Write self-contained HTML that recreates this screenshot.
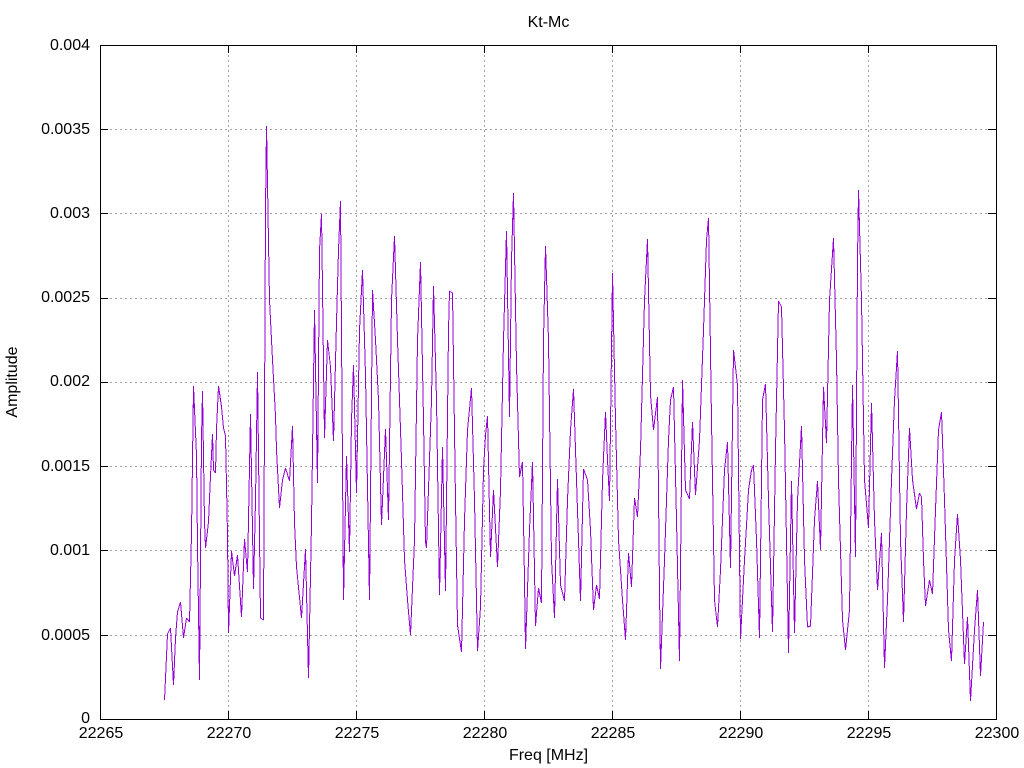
<!DOCTYPE html>
<html>
<head>
<meta charset="utf-8">
<title>Kt-Mc</title>
<style>
html,body{margin:0;padding:0;background:#fff;width:1024px;height:768px;overflow:hidden}
svg{display:block}
text{font-family:"Liberation Sans",sans-serif;font-size:16px;fill:#000}
.g{stroke:#a0a0a0;stroke-width:1;stroke-dasharray:2 3;fill:none}
.k{stroke:#000;stroke-width:1;fill:none}
</style>
</head>
<body>
<svg width="1024" height="768" viewBox="0 0 1024 768" shape-rendering="crispEdges">
<defs>
<filter id="t" filterUnits="userSpaceOnUse" x="0" y="0" width="1024" height="768" color-interpolation-filters="sRGB">
<feComponentTransfer><feFuncA type="discrete" tableValues="0 1"/></feComponentTransfer>
</filter>
</defs>
<rect width="1024" height="768" fill="#fff"/>
<path class="g" d="M100 129.5H996M100 213.5H996M100 298.5H996M100 382.5H996M100 466.5H996M100 550.5H996M100 635.5H996M228.5 45V719M356.5 45V719M484.5 45V719M612.5 45V719M740.5 45V719M868.5 45V719"/>
<path class="k" d="M100 129.5h8M100 213.5h8M100 298.5h8M100 382.5h8M100 466.5h8M100 550.5h8M100 635.5h8M996 129.5h-8M996 213.5h-8M996 298.5h-8M996 382.5h-8M996 466.5h-8M996 550.5h-8M996 635.5h-8M228.5 719v-8M356.5 719v-8M484.5 719v-8M612.5 719v-8M740.5 719v-8M868.5 719v-8M228.5 45v8M356.5 45v8M484.5 45v8M612.5 45v8M740.5 45v8M868.5 45v8"/>
<rect class="k" x="100.5" y="45.5" width="896" height="674" />
<g filter="url(#t)">
<polyline fill="none" stroke="#9400d3" stroke-width="1" stroke-linejoin="bevel" shape-rendering="auto" points="164.5,700 167.5,634 170.5,628 173.5,685 175.5,638 177.5,612 180.5,602 183.5,638 186.5,618 189.5,622 191.5,533 193.5,386 196.5,455 197.5,545 199.5,680 201.5,438 202.5,391 204.5,522 205.5,548 208.5,522 210.5,476 212.5,434 213.5,470 215.5,473 216.5,429 218.5,386 221.5,407 223.5,428 225.5,436 227.5,535 228.5,633 231.5,551 234.5,576 237.5,555 241.5,617 244.5,539 247.5,572 250.5,414 253.5,589 255.5,500 257.5,372 260.5,618 263.5,620 265.5,209 266.5,126 269.5,300 272.5,360 275.5,416 276.5,450 279.5,508 282.5,480 285.5,468 289.5,481 292.5,426 294.5,523 296.5,567 301.5,618 305.5,549 308.5,678 311.5,523 314.5,310 317.5,483 319.5,250 321.5,214 324.5,438 327.5,340 330.5,367 333.5,441 336.5,322 338.5,250 340.5,201 343.5,600 346.5,456 349.5,552 351.5,420 353.5,365 356.5,493 359.5,330 362.5,270 365.5,375 369.5,600 372.5,290 375.5,340 378.5,400 381.5,525 385.5,429 388.5,520 391.5,300 394.5,236 397.5,340 401.5,460 404.5,560 407.5,600 410.5,635 414.5,540 417.5,340 420.5,262 423.5,420 425.5,542 426.5,548 431.5,400 433.5,286 436.5,400 439.5,595 442.5,447 445.5,591 448.5,330 449.5,291 452.5,293 455.5,500 457.5,625 461.5,652 464.5,520 467.5,430 471.5,388 474.5,500 477.5,651 480.5,607 483.5,470 485.5,435 487.5,416 490.5,557 493.5,490 497.5,567 500.5,490 503.5,340 506.5,231 509.5,417 511.5,260 513.5,193 516.5,365 519.5,477 522.5,462 524.5,580 525.5,649 529.5,530 532.5,462 535.5,626 538.5,588 541.5,603 543.5,340 545.5,246 548.5,340 551.5,560 554.5,618 557.5,479 560.5,585 564.5,601 567.5,500 570.5,430 573.5,389 576.5,480 580.5,601 583.5,469 587.5,480 590.5,530 593.5,610 596.5,585 599.5,599 602.5,480 605.5,412 607.5,460 609.5,501 611.5,350 612.5,273 615.5,420 618.5,540 622.5,600 625.5,640 628.5,553 631.5,587 634.5,498 637.5,517 640.5,450 644.5,300 647.5,239 650.5,395 653.5,430 657.5,397 659.5,590 660.5,669 664.5,560 668.5,440 670.5,400 673.5,387 676.5,520 679.5,661 682.5,380 685.5,490 689.5,499 692.5,422 695.5,495 699.5,440 703.5,330 706.5,240 708.5,218 711.5,420 714.5,600 717.5,627 720.5,570 724.5,470 727.5,442 730.5,568 733.5,350 737.5,385 740.5,639 744.5,560 748.5,490 751.5,470 753.5,465 756.5,540 759.5,638 762.5,400 765.5,384 768.5,500 772.5,632 775.5,450 778.5,301 781.5,307 784.5,430 788.5,653 791.5,481 794.5,633 797.5,500 801.5,426 804.5,560 807.5,627 810.5,626 814.5,520 817.5,481 820.5,550 823.5,387 826.5,443 829.5,300 833.5,238 836.5,360 838.5,480 842.5,620 845.5,650 849.5,610 852.5,385 855.5,557 857.5,260 858.5,190 861.5,300 864.5,480 868.5,528 871.5,403 874.5,520 877.5,590 881.5,533 884.5,668 887.5,600 891.5,480 894.5,400 897.5,351 900.5,540 903.5,622 906.5,510 909.5,428 912.5,480 916.5,509 919.5,493 921.5,497 923.5,560 925.5,606 929.5,580 932.5,594 935.5,510 938.5,430 941.5,412 944.5,500 948.5,630 951.5,661 954.5,560 957.5,514 960.5,560 964.5,664 967.5,617 970.5,701 974.5,630 977.5,590 980.5,676 983.5,622"/>
</g>
<g text-anchor="end" shape-rendering="auto">
<text x="90" y="50">0.004</text>
<text x="90" y="134">0.0035</text>
<text x="90" y="218">0.003</text>
<text x="90" y="302">0.0025</text>
<text x="90" y="386">0.002</text>
<text x="90" y="471">0.0015</text>
<text x="90" y="555">0.001</text>
<text x="90" y="640">0.0005</text>
<text x="90" y="723">0</text>
</g>
<g text-anchor="middle">
<text x="101" y="738">22265</text>
<text x="229" y="738">22270</text>
<text x="357" y="738">22275</text>
<text x="485" y="738">22280</text>
<text x="613" y="738">22285</text>
<text x="741" y="738">22290</text>
<text x="869" y="738">22295</text>
<text x="997" y="738">22300</text>
<text x="548.5" y="27">Kt-Mc</text>
<text x="548.5" y="760">Freq [MHz]</text>
<text transform="translate(17,382) rotate(-90)">Amplitude</text>
</g>
</svg>
</body>
</html>
